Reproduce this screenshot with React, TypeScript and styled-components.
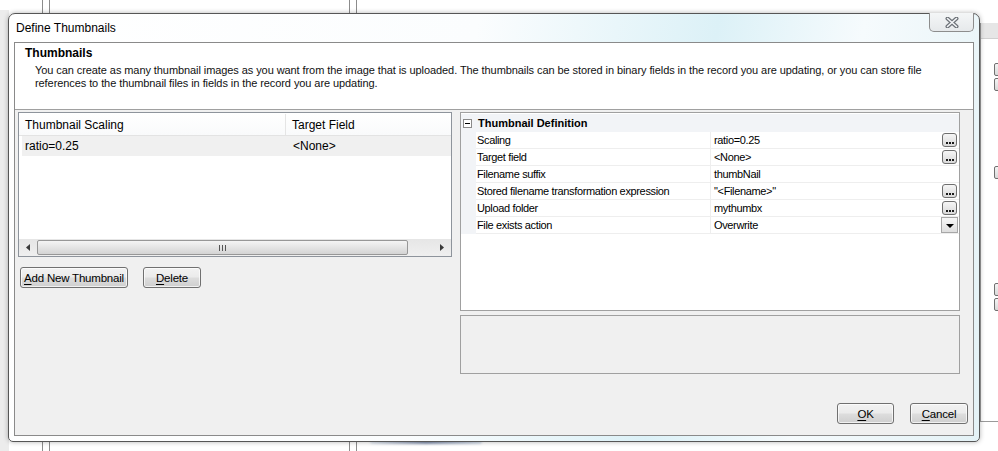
import styled, { createGlobalStyle } from "styled-components";

const GlobalStyle = createGlobalStyle`
  html, body {
    margin: 0;
    padding: 0;
  }
  body {
    width: 998px;
    height: 451px;
    overflow: hidden;
    background: #ffffff;
    font-family: "Liberation Sans", Arial, sans-serif;
    color: #000;
  }
`;

const Desktop = styled.div`
  position: relative;
  width: 998px;
  height: 451px;
  overflow: hidden;
  background: #ffffff;
`;

/* bits of the windows lying behind the dialog */
const LeftStrip = styled.div`
  position: absolute;
  left: 0;
  top: 10px;
  width: 9px;
  height: 441px;
  background: #ececec;
`;

const VLine = styled.div<{ $x: number; $top: number; $h: number }>`
  position: absolute;
  left: ${(p) => p.$x}px;
  top: ${(p) => p.$top}px;
  width: 1px;
  height: ${(p) => p.$h}px;
  background: #8c8c8c;
`;

const BackWindow = styled.div`
  position: absolute;
  left: 980px;
  top: 23px;
  width: 18px;
  height: 398px;
  border-left: 1px solid #9a9a9a;
  border-bottom: 1px solid #9a9a9a;
  background: #ffffff;
`;

const BackHeader = styled.div`
  height: 15px;
  background: #e6e6e6;
  border-bottom: 1px solid #d0d0d0;
`;

const BackButton = styled.div<{ $y: number }>`
  position: absolute;
  left: 13px;
  top: ${(p) => p.$y}px;
  width: 8px;
  height: 11px;
  border: 1px solid #707070;
  border-radius: 2px;
  background: linear-gradient(#f4f4f4, #d8d8d8);
`;

const BottomGlow = styled.div`
  position: absolute;
  left: 370px;
  top: 440px;
  width: 112px;
  height: 4px;
  border-radius: 2px;
  background: linear-gradient(90deg, rgba(120, 150, 190, 0.2), rgba(80, 100, 140, 0.7), rgba(120, 150, 190, 0.3));
  filter: blur(1px);
`;

/* dialog window */
const Window = styled.div`
  position: absolute;
  left: 8px;
  top: 13px;
  width: 972px;
  height: 429px;
  box-sizing: border-box;
  border: 1px solid #565656;
  border-radius: 7px 7px 5px 5px;
  background: linear-gradient(
    100deg,
    #ffffff 0%,
    #fbfdfe 45%,
    #dcf1f7 68%,
    #f6fbfd 82%,
    #e4f2f6 100%
  );
  box-shadow: 0 0 5px rgba(0, 0, 0, 0.3);
  display: flex;
  flex-direction: column;
  padding: 0 5px 5px 5px;
`;

const TitleBar = styled.div`
  height: 28px;
  display: flex;
  align-items: center;
  justify-content: space-between;
`;

const Title = styled.span`
  font-size: 12px;
  padding-left: 2px;
  color: #000;
`;

const CloseButton = styled.div`
  align-self: flex-start;
  margin-top: -1px;
  width: 45px;
  height: 19px;
  box-sizing: border-box;
  border: 1px solid #8d8d8d;
  border-top: none;
  border-radius: 0 0 5px 5px;
  background: linear-gradient(#f4f6f7, #e6e9eb);
  display: flex;
  align-items: center;
  justify-content: center;
`;

const Client = styled.div`
  flex: 1;
  border: 1px solid #8a8a8a;
  background: #f0f0f0;
  display: flex;
  flex-direction: column;
  min-height: 0;
`;

const Header = styled.div`
  height: 67px;
  box-sizing: border-box;
  background: #ffffff;
  border-bottom: 1px solid #a0a0a0;
  padding: 3px 10px 0 10px;
`;

const HeaderTitle = styled.div`
  font-size: 12px;
  font-weight: bold;
  line-height: 15px;
`;

const HeaderText = styled.div`
  font-size: 11px;
  line-height: 13px;
  letter-spacing: -0.08px;
  margin-top: 3px;
  padding-left: 10px;
  color: #111;
`;

const Main = styled.div`
  flex: 1;
  display: grid;
  grid-template-columns: 434px 500px;
  column-gap: 8px;
  align-items: start;
  padding: 2px 0 0 3px;
`;

const LeftColumn = styled.div`
  display: flex;
  flex-direction: column;
`;

const RightColumn = styled.div`
  display: flex;
  flex-direction: column;
  gap: 4px;
`;

/* list view */
const ListView = styled.div`
  height: 145px;
  box-sizing: border-box;
  border: 1px solid #8e949c;
  background: #ffffff;
  display: flex;
  flex-direction: column;
`;

const ListHeader = styled.div`
  height: 23px;
  box-sizing: border-box;
  display: flex;
  border-bottom: 1px solid #e3e3e3;
  background: linear-gradient(#ffffff, #f9fafb);
  font-size: 12px;
  padding-top: 1px;
`;

const HeaderCell = styled.div<{ $w?: number }>`
  ${(p) => (p.$w ? `width: ${p.$w}px; border-right: 1px solid #e5e5e5;` : "flex: 1;")}
  padding-left: 6px;
  box-sizing: border-box;
  display: flex;
  align-items: center;
`;

const ListRow = styled.div`
  height: 20px;
  margin: 0 0 0 3px;
  display: flex;
  align-items: center;
  background: #f0f0f0;
  font-size: 12px;
`;

const RowCell = styled.div<{ $w?: number; $pad: number }>`
  ${(p) => (p.$w ? `width: ${p.$w}px;` : "flex: 1;")}
  padding-left: ${(p) => p.$pad}px;
  box-sizing: border-box;
`;

const HScroll = styled.div`
  margin-top: auto;
  height: 17px;
  display: flex;
  align-items: stretch;
  background: linear-gradient(#e6e6e6, #efefef);
`;

const ScrollArrow = styled.div`
  width: 18px;
  display: flex;
  align-items: center;
  justify-content: center;
`;

const ScrollThumb = styled.div`
  width: 371px;
  margin: 1px 0;
  box-sizing: border-box;
  border: 1px solid #979797;
  border-radius: 2px;
  background: linear-gradient(#f4f4f4, #e4e4e4 50%, #d4d4d4);
  display: flex;
  align-items: center;
  justify-content: center;
`;

const ScrollTrack = styled.div`
  flex: 1;
`;

const ButtonRow = styled.div`
  display: flex;
  gap: 15px;
  margin-top: 10px;
  padding-left: 2px;
`;

const Button = styled.div<{ $w: number }>`
  width: ${(p) => p.$w}px;
  height: 21px;
  box-sizing: border-box;
  border: 1px solid #707070;
  border-radius: 3px;
  background: linear-gradient(#f2f2f2 0%, #ebebeb 48%, #dddddd 52%, #cfcfcf 100%);
  box-shadow: inset 0 0 0 1px rgba(255, 255, 255, 0.7);
  display: flex;
  align-items: center;
  justify-content: center;
  font-size: 11.5px;
  letter-spacing: -0.2px;
  white-space: nowrap;
  color: #000;
  u {
    text-decoration: underline;
    text-underline-offset: 2px;
  }
`;

/* property grid */
const PropGrid = styled.div`
  height: 199px;
  box-sizing: border-box;
  border: 1px solid #a0a0a0;
  padding-top: 1px;
  background: #ffffff;
  font-size: 11px;
  letter-spacing: -0.35px;
`;

const CategoryRow = styled.div`
  height: 18px;
  display: flex;
  align-items: center;
  background: #f2f4f7;
  font-weight: bold;
  letter-spacing: 0;
`;

const Expander = styled.div`
  width: 9px;
  height: 9px;
  box-sizing: border-box;
  margin: 0 6px 0 2px;
  border: 1px solid #8a8a8a;
  background: #fff;
  display: flex;
  align-items: center;
  justify-content: center;
  &::after {
    content: "";
    width: 5px;
    height: 1px;
    background: #000;
  }
`;

const PropRow = styled.div`
  height: 17px;
  display: flex;
`;

const PropMargin = styled.div`
  width: 15px;
  background: #f2f4f7;
`;

const PropLabel = styled.div`
  width: 235px;
  box-sizing: border-box;
  padding-left: 1px;
  border-right: 1px solid #eeeeee;
  border-bottom: 1px solid #eeeeee;
  display: flex;
  align-items: center;
  white-space: nowrap;
`;

const PropValue = styled.div`
  flex: 1;
  box-sizing: border-box;
  padding: 0 2px 0 3px;
  border-bottom: 1px solid #eeeeee;
  display: flex;
  align-items: center;
  justify-content: space-between;
`;

const EllipsisButton = styled.div`
  width: 15px;
  height: 14px;
  box-sizing: border-box;
  border: 1px solid #6f6f6f;
  border-radius: 3px;
  background: linear-gradient(#f6f6f6, #d9d9d9);
  display: flex;
  align-items: flex-end;
  justify-content: center;
  gap: 1px;
  padding-bottom: 2px;
  span {
    width: 2px;
    height: 2px;
    background: #1a1a1a;
  }
`;

const DropButton = styled.div`
  width: 17px;
  height: 16px;
  margin-right: -1px;
  box-sizing: border-box;
  border: 1px solid #a7a7a7;
  background: linear-gradient(#f7f7f7, #dedede);
  display: flex;
  align-items: center;
  justify-content: center;
  &::after {
    content: "";
    border-left: 4px solid transparent;
    border-right: 4px solid transparent;
    border-top: 4px solid #000;
    margin-top: 1px;
  }
`;

const DescriptionPane = styled.div`
  height: 59px;
  box-sizing: border-box;
  border: 1px solid #a0a0a0;
  background: #f0f0f0;
`;

const Footer = styled.div`
  display: flex;
  justify-content: flex-end;
  gap: 16px;
  padding: 0 5px 11px 0;
`;

type Prop = { label: string; value: string; btn?: "ellipsis" | "drop" };

const props: Prop[] = [
  { label: "Scaling", value: "ratio=0.25", btn: "ellipsis" },
  { label: "Target field", value: "<None>", btn: "ellipsis" },
  { label: "Filename suffix", value: "thumbNail" },
  { label: "Stored filename transformation expression", value: '"<Filename>"', btn: "ellipsis" },
  { label: "Upload folder", value: "mythumbx", btn: "ellipsis" },
  { label: "File exists action", value: "Overwrite", btn: "drop" },
];

function CloseGlyph() {
  return (
    <svg width="14" height="11" viewBox="0 0 14 11">
      <path d="M2.5 1.5 L11.5 9.5 M11.5 1.5 L2.5 9.5" stroke="#6d7278" strokeWidth="4" strokeLinecap="round" fill="none" />
      <path d="M2.5 1.5 L11.5 9.5 M11.5 1.5 L2.5 9.5" stroke="#f4f6f8" strokeWidth="1.6" strokeLinecap="round" fill="none" />
    </svg>
  );
}

function Arrow({ dir }: { dir: "left" | "right" }) {
  return (
    <svg width="4" height="7" viewBox="0 0 4 7">
      {dir === "left" ? <path d="M4 0 L0 3.5 L4 7 Z" fill="#3a3a3a" /> : <path d="M0 0 L4 3.5 L0 7 Z" fill="#3a3a3a" />}
    </svg>
  );
}

function Grip() {
  return (
    <svg width="8" height="6" viewBox="0 0 8 6">
      <path d="M0.5 0 V6 M3.5 0 V6 M6.5 0 V6" stroke="#555" strokeWidth="1" />
    </svg>
  );
}

export default function App() {
  return (
    <Desktop>
      <GlobalStyle />
      <LeftStrip />
      <VLine $x={42} $top={0} $h={14} />
      <VLine $x={49} $top={0} $h={14} />
      <VLine $x={349} $top={0} $h={14} />
      <VLine $x={356} $top={0} $h={14} />
      <VLine $x={42} $top={441} $h={10} />
      <VLine $x={49} $top={441} $h={10} />
      <VLine $x={349} $top={441} $h={10} />
      <VLine $x={356} $top={441} $h={10} />
      <BackWindow>
        <BackHeader />
        <BackButton $y={40} />
        <BackButton $y={55} />
        <BackButton $y={143} />
        <BackButton $y={260} />
        <BackButton $y={275} />
      </BackWindow>
      <BottomGlow />

      <Window>
        <TitleBar>
          <Title>Define Thumbnails</Title>
          <CloseButton>
            <CloseGlyph />
          </CloseButton>
        </TitleBar>
        <Client>
          <Header>
            <HeaderTitle>Thumbnails</HeaderTitle>
            <HeaderText>
              You can create as many thumbnail images as you want from the image that is uploaded. The thumbnails can be
              stored in binary fields in the record you are updating, or you can store file references to the thumbnail
              files in fields in the record you are updating.
            </HeaderText>
          </Header>

          <Main>
            <LeftColumn>
              <ListView>
                <ListHeader>
                  <HeaderCell $w={267}>Thumbnail Scaling</HeaderCell>
                  <HeaderCell>Target Field</HeaderCell>
                </ListHeader>
                <ListRow>
                  <RowCell $w={264} $pad={3}>
                    ratio=0.25
                  </RowCell>
                  <RowCell $pad={7}>&lt;None&gt;</RowCell>
                </ListRow>
                <HScroll>
                  <ScrollArrow>
                    <Arrow dir="left" />
                  </ScrollArrow>
                  <ScrollThumb>
                    <Grip />
                  </ScrollThumb>
                  <ScrollTrack />
                  <ScrollArrow>
                    <Arrow dir="right" />
                  </ScrollArrow>
                </HScroll>
              </ListView>
              <ButtonRow>
                <Button $w={108}>
                  <span>
                    <u>A</u>dd New Thumbnail
                  </span>
                </Button>
                <Button $w={58}>
                  <span>
                    <u>D</u>elete
                  </span>
                </Button>
              </ButtonRow>
            </LeftColumn>

            <RightColumn>
              <PropGrid>
                <CategoryRow>
                  <Expander />
                  Thumbnail Definition
                </CategoryRow>
                {props.map((p) => (
                  <PropRow key={p.label}>
                    <PropMargin />
                    <PropLabel>{p.label}</PropLabel>
                    <PropValue>
                      <span>{p.value}</span>
                      {p.btn === "ellipsis" && (
                        <EllipsisButton>
                          <span />
                          <span />
                          <span />
                        </EllipsisButton>
                      )}
                      {p.btn === "drop" && <DropButton />}
                    </PropValue>
                  </PropRow>
                ))}
              </PropGrid>
              <DescriptionPane />
            </RightColumn>
          </Main>

          <Footer>
            <Button $w={57}>
              <span>
                <u>O</u>K
              </span>
            </Button>
            <Button $w={58}>
              <span>
                <u>C</u>ancel
              </span>
            </Button>
          </Footer>
        </Client>
      </Window>
    </Desktop>
  );
}
